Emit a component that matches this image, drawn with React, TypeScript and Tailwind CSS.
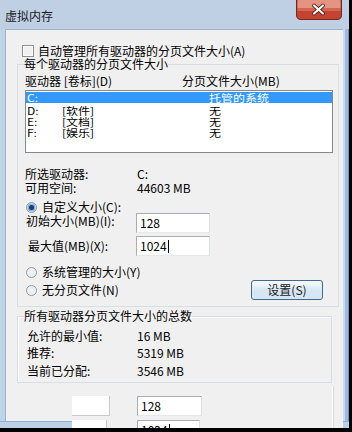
import React from "react";

const FONT = "font-['Noto_Sans_CJK_SC','Liberation_Sans',sans-serif]";

function Radio({ checked }: { checked?: boolean }) {
  return (
    <span className="w-[11px] h-[11px] rounded-full border border-[#8e98a3] bg-[#eef0f2] flex items-center justify-center shrink-0">
      {checked && (
        <span className="w-[5px] h-[5px] rounded-full bg-[#173f73] shadow-[0_0_0_1.5px_#7fb0de]" />
      )}
    </span>
  );
}

function Input({ value, caret, w = 74 }: { value: string; caret?: boolean; w?: number }) {
  return (
    <div
      className="h-[20px] bg-white border border-[#abadb3] border-r-[#dbdfe6] border-b-[#e3e9ef] flex items-center pl-[3px] shrink-0"
      style={{ width: w }}
    >
      <span>{value}</span>
      {caret && <span className="w-px h-[13px] bg-black ml-px" />}
    </div>
  );
}

function Row({ a, b, c, sel }: { a: string; b: string; c: string; sel?: boolean }) {
  return (
    <div
      className={
        sel
          ? "h-[11px] leading-[11px] flex items-center bg-[#3399ff] text-white pl-px"
          : "h-[11px] leading-[11px] flex items-center pl-px"
      }
    >
      <span className="w-[35px] inline-block scale-y-[0.82] origin-center">{a}</span>
      <span className="w-[147px] inline-block scale-y-[0.82] origin-center">{b}</span>
      <span className="inline-block scale-y-[0.82] origin-center">{c}</span>
    </div>
  );
}

function CloseButton() {
  return (
    <svg width="46" height="20" viewBox="0 0 46 20" className="ml-auto mr-[7px] shrink-0 block">
      <path d="M0.5 0 V15 Q0.5 19.5 5 19.5 H41 Q45.5 19.5 45.5 15 V0 Z" fill="#c4432f" stroke="#6e2a20" />
      <rect x="1.5" y="0" width="43" height="8" fill="#e39582" />
      <rect x="1.5" y="8" width="43" height="3" fill="#d2664f" />
      <path d="M18 5.5 L27 13.5 M27 5.5 L18 13.5" stroke="#5a1f18" strokeWidth="3.8" strokeLinecap="round" />
      <path d="M18 5.5 L27 13.5 M27 5.5 L18 13.5" stroke="#ffffff" strokeWidth="2.2" strokeLinecap="round" />
    </svg>
  );
}

export default function App() {
  return (
    <div className={`w-[352px] h-[432px] bg-black overflow-hidden relative text-[12px] leading-[12px] text-black ${FONT}`}>
      <div className="w-[349px] h-[428px] flex flex-col bg-[#c4d7ec]">
        {/* Title bar */}
        <div className="h-[29px] shrink-0 flex bg-[#bfd0e4]">
          <span className="ml-[5px] mt-[9px] text-[12px] leading-[13px] text-[#1a1a1a]">虚拟内存</span>
          <CloseButton />
        </div>

        {/* Middle */}
        <div className="flex flex-1 min-h-0">
          <div className="w-[5px] bg-[#bfd3e9]" />
          <div className="w-[338px] bg-[#f0f0f0] border-t border-l border-[#9fb4cc] flex flex-col">
            {/* checkbox row */}
            <div className="mt-[14px] ml-[16px] h-[13px] flex items-center">
              <span className="w-[12px] h-[12px] border border-[#8f8f8f] bg-[#f0f0f0] shadow-[inset_0_0_0_1px_#fbfbfb] shrink-0" />
              <span className="ml-[4px]">自动管理所有驱动器的分页文件大小(A)</span>
            </div>

            {/* Group 1 */}
            <fieldset className="mt-[1px] ml-[11px] w-[322px] border border-[#d5dfe5] pb-[6px]">
              <legend className="ml-[6px] h-[12px] leading-[12px]">每个驱动器的分页文件大小</legend>
              <div className="mt-[5px] pl-[7px] h-[12px] flex">
                <span className="w-[157px]">驱动器 [卷标](D)</span>
                <span>分页文件大小(MB)</span>
              </div>
              <div className="mt-[3px] ml-[7px] w-[308px] h-[63px] bg-white border border-[#828790] flex flex-col pt-[1px]">
                <Row a="C:" b="" c="托管的系统" sel />
                <div className="mt-[2px]">
                  <Row a="D:" b="[软件]" c="无" />
                </div>
                <Row a="E:" b="[文档]" c="无" />
                <Row a="F:" b="[娱乐]" c="无" />
              </div>

              <div className="mt-[15px] pl-[7px] h-[12px] flex">
                <span className="w-[112px]">所选驱动器:</span>
                <span>C:</span>
              </div>
              <div className="mt-[2px] pl-[7px] h-[12px] flex">
                <span className="w-[112px]">可用空间:</span>
                <span>44603 MB</span>
              </div>

              <div className="mt-[7px] pl-[8px] h-[12px] flex items-center">
                <Radio checked />
                <span className="ml-[5px]">自定义大小(C):</span>
              </div>
              <div className="pl-[8px] flex items-start">
                <span className="w-[110px] mt-[2px]">初始大小(MB)(I):</span>
                <Input value="128" />
              </div>
              <div className="mt-[3px] pl-[10px] flex items-center">
                <span className="w-[108px]">最大值(MB)(X):</span>
                <Input value="1024" caret />
              </div>
              <div className="mt-[10px] pl-[8px] h-[12px] flex items-center">
                <Radio />
                <span className="ml-[5px]">系统管理的大小(Y)</span>
              </div>
              <div className="mt-[2px] pl-[8px] pr-[15px] h-[20px] flex items-center">
                <Radio />
                <span className="ml-[5px]">无分页文件(N)</span>
                <div className="ml-auto w-[72px] h-[20px] rounded-[3px] border border-[#3c6a92] bg-[#d6e6f2] shadow-[inset_0_8px_4px_-2px_#f1f7fb] flex items-center justify-center text-[#1a1a1a]">
                  设置(S)
                </div>
              </div>
            </fieldset>

            {/* Group 2 */}
            <fieldset className="mt-[3px] ml-[11px] w-[315px] border border-[#d5dfe5] pb-[5px] shadow-[inset_1px_1px_0_#ffffff]">
              <legend className="ml-[6px] h-[12px] leading-[12px]">所有驱动器分页文件大小的总数</legend>
              <div className="mt-[8px] pl-[9px] h-[12px] flex">
                <span className="w-[110px]">允许的最小值:</span>
                <span>16 MB</span>
              </div>
              <div className="mt-[5px] pl-[9px] h-[12px] flex">
                <span className="w-[110px]">推荐:</span>
                <span>5319 MB</span>
              </div>
              <div className="mt-[6px] pl-[9px] h-[12px] flex">
                <span className="w-[110px]">当前已分配:</span>
                <span>3546 MB</span>
              </div>
            </fieldset>
          </div>
          <div className="flex-1 bg-[#9fbbdd] border-l-2 border-[#c9dbee] border-r border-r-[#6f92c0]" />
        </div>
        <div className="h-[7px] shrink-0 bg-[#bcd1e8] border-t border-[#8fb0d6]" />
      </div>

      {/* overlapped window fragment */}
      <div className="absolute left-[72px] top-[386px] w-[271px] h-[42px] bg-[#f0f0f0] flex overflow-hidden">
        <div className="w-[260px] flex flex-col">
          <div className="mt-[2px] h-px flex">
            <div className="ml-[3px] w-[108px] bg-[#6d6d6d]" />
            <div className="flex-1 bg-[#dadada]" />
          </div>
          <div className="mt-[8px] flex gap-[27px]">
            <div className="w-[38px] h-[20px] bg-white border-r border-b border-[#c9c9c9]" />
            <Input value="128" w={65} />
          </div>
          <div className="mt-[4px] flex gap-[30px]">
            <div className="w-[35px] h-[20px] bg-white border-r border-[#c9c9c9]" />
            <Input value="1024" caret w={63} />
          </div>
        </div>
        <div className="w-px bg-white" />
        <div className="flex-1 border-l border-[#dcdcdc]" />
      </div>
    </div>
  );
}
